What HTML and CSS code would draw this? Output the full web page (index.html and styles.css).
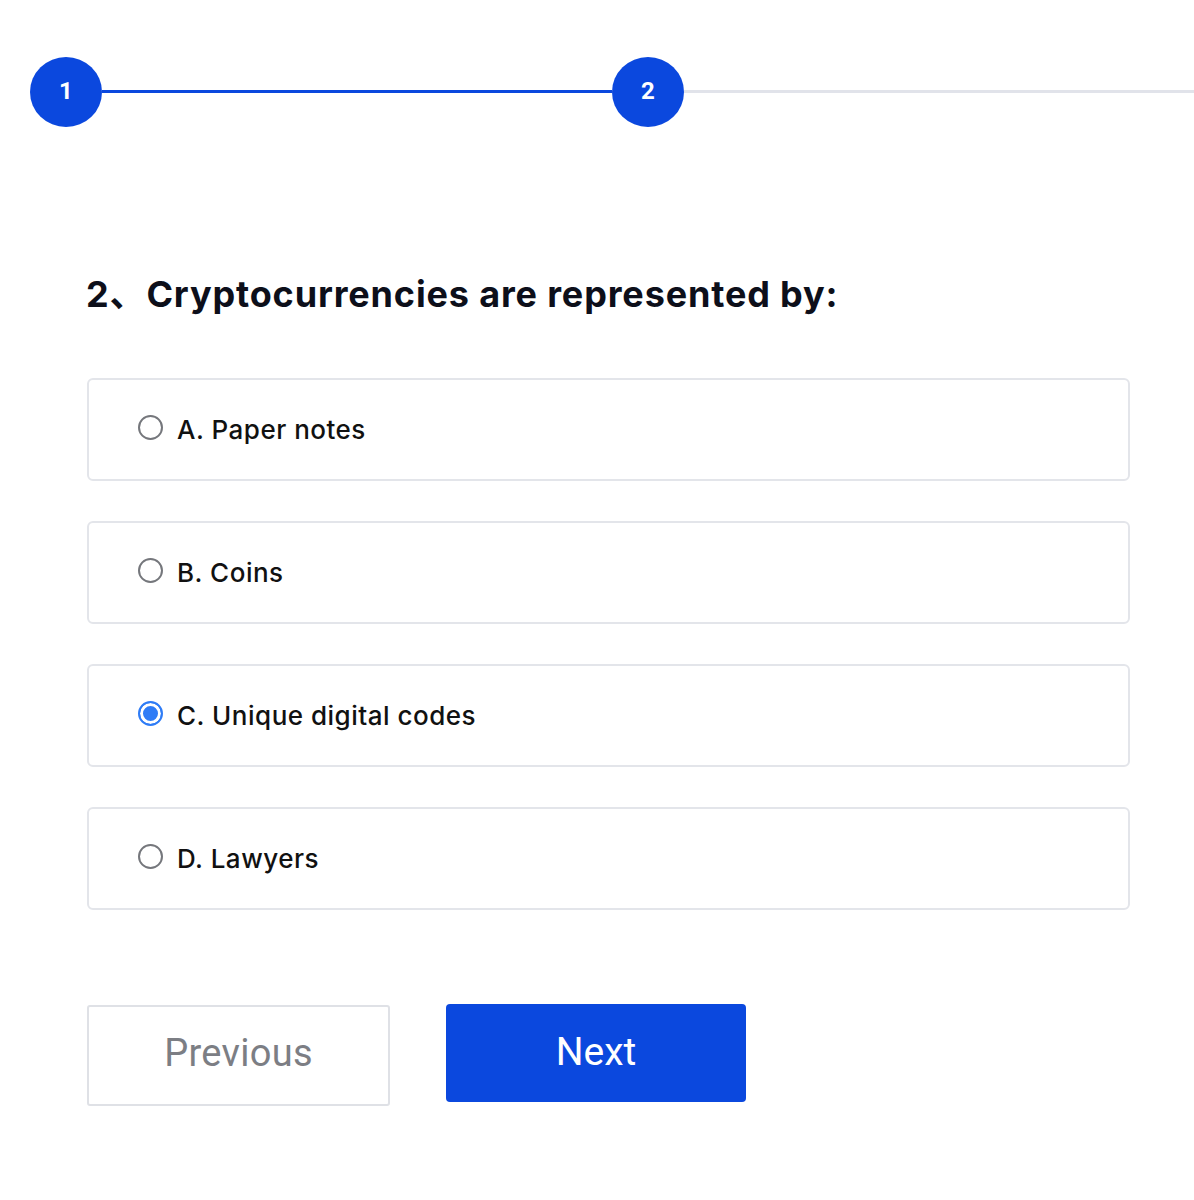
FILE: index.html
```html
<!DOCTYPE html>
<html lang="en">
<head>
<meta charset="utf-8">
<title>Quiz</title>
<link rel="stylesheet" href="styles.css">
</head>
<body>
<div class="stepper">
  <div class="step active">1</div>
  <div class="bar active"></div>
  <div class="step active">2</div>
  <div class="bar rest"></div>
</div>
<main class="quiz">
  <h2 class="question">2、Cryptocurrencies are represented by:</h2>
  <div class="options">
    <label class="option"><span class="radio"></span><span class="label">A. Paper notes</span></label>
    <label class="option"><span class="radio"></span><span class="label">B. Coins</span></label>
    <label class="option"><span class="radio checked"></span><span class="label">C. Unique digital codes</span></label>
    <label class="option"><span class="radio"></span><span class="label">D. Lawyers</span></label>
  </div>
  <div class="actions">
    <button class="btn prev">Previous</button>
    <button class="btn next">Next</button>
  </div>
</main>
</body>
</html>
```
FILE: styles.css
```css
html, body {
  margin: 0;
  padding: 0;
  background: #ffffff;
}
body {
  font-family: "Inter", "Noto Sans CJK SC", sans-serif;
  color: #0d0f1a;
  overflow: hidden;
}
.stepper {
  display: flex;
  align-items: center;
  padding: 57px 0 0 30px;
}
.step {
  flex: none;
  width: 72px;
  height: 70px;
  border-radius: 50%;
  background: #0b48de;
  color: #fff;
  display: flex;
  align-items: center;
  justify-content: center;
  font-family: "Roboto", sans-serif;
  font-weight: 700;
  font-size: 24px;
  padding-bottom: 2px;
  box-sizing: border-box;
}
.bar {
  height: 3px;
  margin-top: -2px;
}
.bar.active {
  width: 510px;
  background: #0b48de;
}
.bar.rest {
  flex: 1;
  background: #e1e3ea;
}
.quiz {
  padding: 0 64px 0 86px;
}
.question {
  margin: 0;
  padding-top: 145px;
  font-size: 36px;
  line-height: 44px;
  font-weight: 700;
  letter-spacing: 0.85px;
}
.options {
  margin-top: 62px;
  display: flex;
  flex-direction: column;
  gap: 40px;
}
.option {
  display: flex;
  align-items: center;
  height: 99px;
  border: 2px solid #e3e5ea;
  border-radius: 6px;
  padding-left: 49px;
  margin-left: 1px;
}
.radio {
  width: 25px;
  height: 25px;
  border: 2px solid #75777c;
  border-radius: 50%;
  box-sizing: border-box;
  margin-right: 14px;
  margin-top: -4px;
}
.radio.checked {
  border: 2px solid #2f7cf6;
  background: #2f7cf6;
  box-shadow: inset 0 0 0 3px #fff;
}
.label {
  font-size: 26px;
  font-weight: 500;
  color: #111;
  letter-spacing: 0.5px;
}
.actions {
  margin-top: 95px;
  display: flex;
  gap: 56px;
  align-items: flex-start;
}
.btn {
  font-family: "Roboto", sans-serif;
  font-size: 38px;
  cursor: pointer;
}
.prev {
  width: 303px;
  height: 101px;
  background: #fff;
  border: 2px solid #dfe1e6;
  border-radius: 3px;
  color: #7c7e84;
  margin-left: 1px;
  padding-bottom: 6px;
  letter-spacing: 0.3px;
}
.next {
  width: 300px;
  height: 98px;
  background: #0b48de;
  border: none;
  border-radius: 4px;
  color: #fff;
  margin-top: -1px;
  font-size: 39px;
  padding-bottom: 4px;
}
```
